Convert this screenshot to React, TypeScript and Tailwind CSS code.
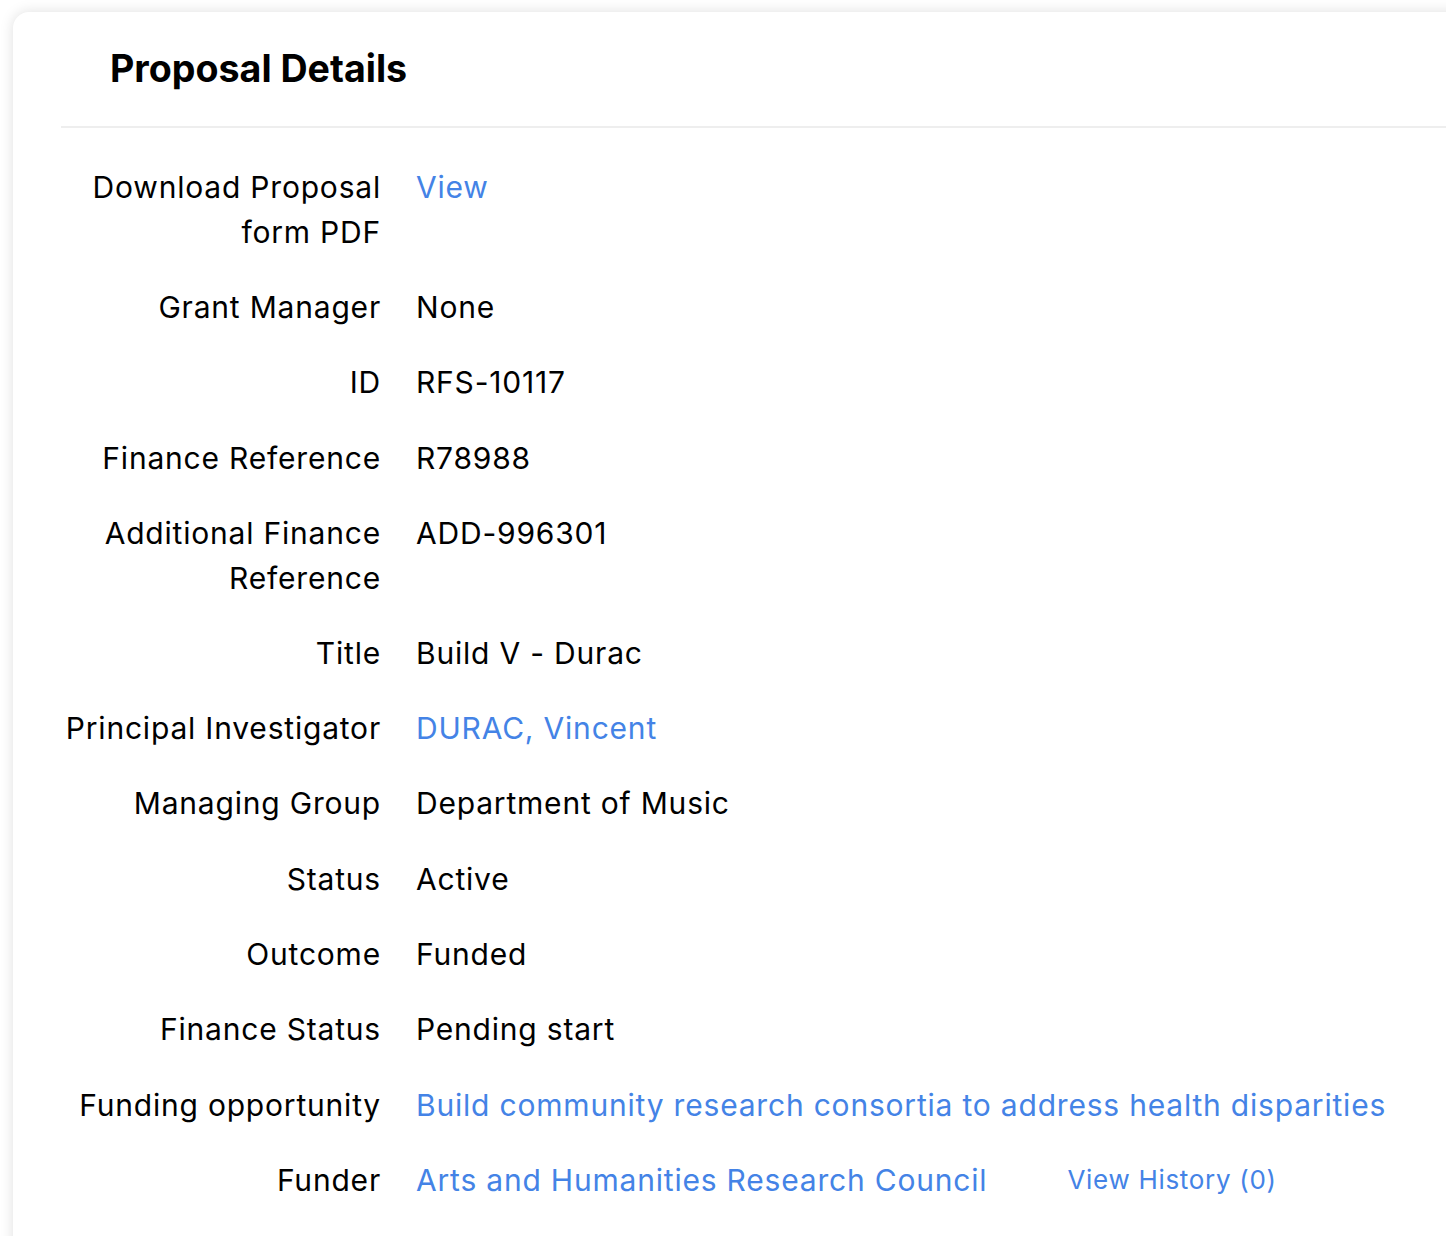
import React from "react";

const LINK = "text-[#4483e6]";

type Row = { label: React.ReactNode; value: React.ReactNode };

const rows: Row[] = [
  { label: <>Download Proposal<br />form PDF</>, value: <a className={LINK}>View</a> },
  { label: "Grant Manager", value: "None" },
  { label: "ID", value: "RFS-10117" },
  { label: "Finance Reference", value: "R78988" },
  { label: <>Additional Finance<br />Reference</>, value: "ADD-996301" },
  { label: "Title", value: "Build V - Durac" },
  { label: "Principal Investigator", value: <a className={LINK}>DURAC, Vincent</a> },
  { label: "Managing Group", value: "Department of Music" },
  { label: "Status", value: "Active" },
  { label: "Outcome", value: "Funded" },
  { label: "Finance Status", value: "Pending start" },
  {
    label: "Funding opportunity",
    value: <a className={LINK}>Build community research consortia to address health disparities</a>,
  },
  {
    label: "Funder",
    value: (
      <span className="flex items-center">
        <a className={LINK}>Arts and Humanities Research Council</a>
        <a className={`${LINK} ml-[80px] text-[26px] tracking-[0.7px]`}>View History (0)</a>
      </span>
    ),
  },
];

export default function App() {
  return (
    <div
      className="w-[1446px] h-[1236px] overflow-hidden bg-white text-black"
      style={{ fontFamily: "Inter, 'Noto Sans', sans-serif" }}
    >
      <div className="ml-[13px] mt-[12px] w-[1480px] min-h-[1300px] rounded-tl-[16px] bg-white shadow-[0_0_14px_rgba(0,0,0,0.13)]">
        <div className="h-[114px] flex items-center pl-[97px]">
          <h1 className="text-[37.6px] font-bold tracking-[0px]">Proposal Details</h1>
        </div>
        <div className="ml-[48px] border-t-2 border-[#eeeeee]" />
        <dl className="ml-[48px] pt-[37px] grid grid-cols-[320px_1fr] gap-x-[35px] gap-y-[30.6px] text-[30px] leading-[44.7px] tracking-[0.8px]">
          {rows.map((r, i) => (
            <React.Fragment key={i}>
              <dt className="text-right">{r.label}</dt>
              <dd className="whitespace-nowrap">{r.value}</dd>
            </React.Fragment>
          ))}
        </dl>
      </div>
    </div>
  );
}
